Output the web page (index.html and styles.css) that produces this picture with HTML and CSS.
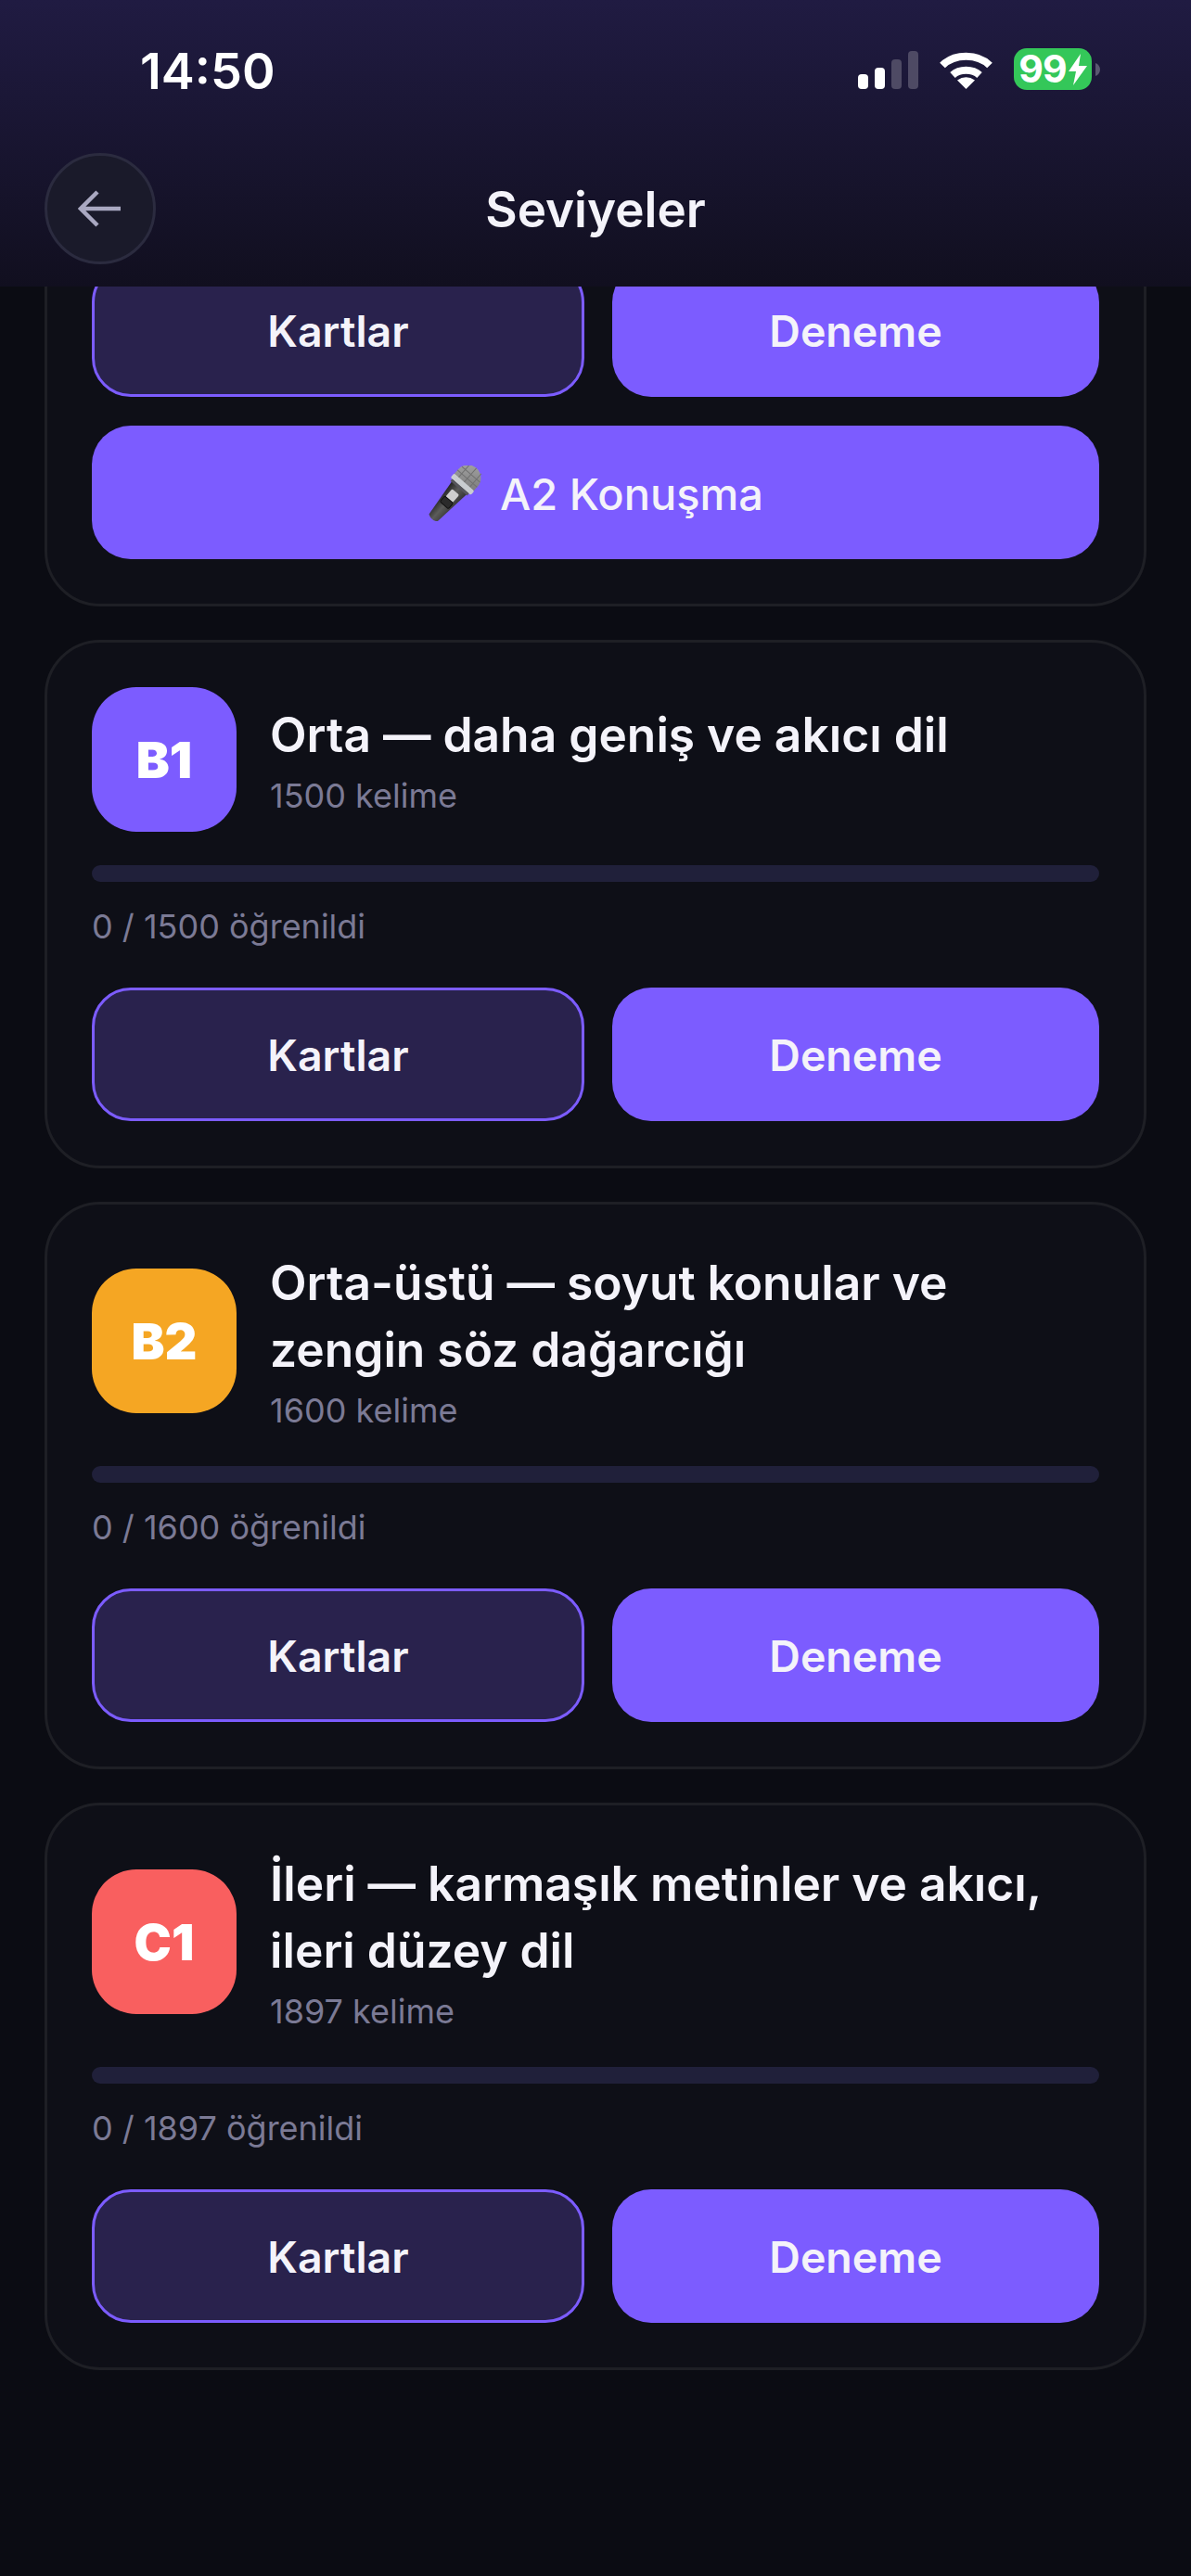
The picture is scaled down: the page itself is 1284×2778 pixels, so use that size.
FILE: index.html
```html
<!DOCTYPE html>
<html lang="tr">
<head>
<meta charset="utf-8">
<title>Seviyeler</title>
<link rel="stylesheet" href="styles.css">
</head>
<body>
<div class="app">
  <header class="topbar">
    <div class="status">
      <span class="time">14:50</span>
      <div class="status-icons">
        <svg class="signal" width="65" height="41" viewBox="0 0 65 41"><rect x="0" y="25" width="11" height="16" rx="4" fill="#fff"/><rect x="18" y="18" width="11" height="23" rx="4" fill="#fff"/><rect x="36" y="9" width="11" height="32" rx="4" fill="#4e4a64"/><rect x="54" y="0" width="11" height="41" rx="4" fill="#4e4a64"/></svg>
        <svg class="wifi" width="57" height="41" viewBox="0 0 57 41"><path d="M3 15.500C16 2.500 41 2.500 54 15.500" fill="none" stroke="#fff" stroke-width="8"/><path d="M14 26C21.500 19 35.500 19 43 26" fill="none" stroke="#fff" stroke-width="8"/><path d="M28.500 41L19 31.500Q28.500 25 38 31.500Z" fill="#fff"/></svg>
        <div class="battery">
          <span class="battery-body"><span>99</span><svg width="20" height="34" viewBox="0 0 20 34"><path d="M13 0L0 19H8L5 34L20 13H11Z" fill="#fff"/></svg></span>
          <svg class="nub" width="5" height="14" viewBox="0 0 5 14"><path d="M0 0C3 1 5 4 5 7S3 13 0 14Z" fill="#5a5670"/></svg>
        </div>
      </div>
    </div>
    <div class="navrow">
      <button class="back" aria-label="Geri">
        <svg width="48" height="40" viewBox="0 0 48 40"><path d="M46 20H3M21 2L3 20L21 38" fill="none" stroke="#a9a8c1" stroke-width="4.500"/></svg>
      </button>
      <h1 class="title">Seviyeler</h1>
      <span class="nav-spacer"></span>
    </div>
  </header>
  <main class="scroller">
    <section class="card card-clipped">
      <div class="actions">
        <button class="btn btn-ghost">Kartlar</button>
        <button class="btn btn-solid">Deneme</button>
      </div>
      <button class="btn btn-solid btn-wide">
        <svg class="mic" width="58" height="60" viewBox="0 0 58 60">
          <defs>
            <linearGradient id="body" x1="0" y1="0" x2="1" y2="0"><stop offset="0" stop-color="#1f1f1f"/><stop offset=".5" stop-color="#5c5c5a"/><stop offset="1" stop-color="#333"/></linearGradient>
            <linearGradient id="head" x1="0" y1="0" x2="1" y2="1"><stop offset="0" stop-color="#a6a6a6"/><stop offset="1" stop-color="#7c7c7c"/></linearGradient>
          </defs>
          <g transform="translate(29 30) rotate(41)">
            <path d="M-11 -12L-6 35Q0 39 6 35L11 -12Z" fill="url(#body)"/>
            <path d="M-14 -22A14 14 0 0 1 14 -22V-15H-14Z" fill="url(#head)"/>
            <path d="M-14 -21H14M-13 -27H13M-8 -35V-14M0 -36V-14M8 -35V-14" stroke="#707070" stroke-width="1" fill="none"/>
            <rect x="-14.500" y="-16" width="29" height="6" rx="2" fill="#c9cdd0"/>
            <rect x="-12" y="-10" width="24" height="3" fill="#55555a"/>
            <rect x="-5" y="-2" width="10" height="11" rx="1.500" fill="#cfcfcf"/>
            <rect x="-6" y="9" width="12" height="8" rx="1.500" fill="#2b2b2b" stroke="#111" stroke-width="1"/>
          </g>
        </svg>
        <span>A2 Konuşma</span>
      </button>
    </section>

    <section class="card">
      <div class="card-head">
        <div class="badge badge-b1">B1</div>
        <div class="card-text">
          <h2 class="card-title">Orta — daha geniş ve akıcı dil</h2>
          <p class="card-sub">1500 kelime</p>
        </div>
      </div>
      <div class="track"></div>
      <p class="progress">0 / 1500 öğrenildi</p>
      <div class="actions">
        <button class="btn btn-ghost">Kartlar</button>
        <button class="btn btn-solid">Deneme</button>
      </div>
    </section>

    <section class="card">
      <div class="card-head">
        <div class="badge badge-b2">B2</div>
        <div class="card-text">
          <h2 class="card-title">Orta-üstü — soyut konular ve zengin söz dağarcığı</h2>
          <p class="card-sub">1600 kelime</p>
        </div>
      </div>
      <div class="track"></div>
      <p class="progress">0 / 1600 öğrenildi</p>
      <div class="actions">
        <button class="btn btn-ghost">Kartlar</button>
        <button class="btn btn-solid">Deneme</button>
      </div>
    </section>

    <section class="card">
      <div class="card-head">
        <div class="badge badge-c1">C1</div>
        <div class="card-text">
          <h2 class="card-title">İleri — karmaşık metinler ve akıcı, ileri düzey dil</h2>
          <p class="card-sub">1897 kelime</p>
        </div>
      </div>
      <div class="track"></div>
      <p class="progress">0 / 1897 öğrenildi</p>
      <div class="actions">
        <button class="btn btn-ghost">Kartlar</button>
        <button class="btn btn-solid">Deneme</button>
      </div>
    </section>
  </main>
</div>
</body>
</html>
```

FILE: styles.css
```css
* { box-sizing: border-box; }
html, body { margin: 0; padding: 0; background: #0b0c13; }
body { font-family: Inter, "Noto Sans", sans-serif; color: #f4f3fa; }
h1, h2, p { margin: 0; }
button { font: inherit; color: inherit; border: 0; background: none; padding: 0; }

.app { width: 1284px; height: 2778px; display: flex; flex-direction: column; overflow: hidden; }

.topbar { height: 309px; flex: none; background: linear-gradient(180deg, #201b42 0%, #110f1f 100%); }
.status { height: 165px; padding: 52px 98px 0 151px; display: flex; justify-content: space-between; align-items: flex-start; }
.time { font-size: 54px; line-height: 50px; font-weight: 600; color: #fff; }
.status-icons { display: flex; align-items: flex-start; }
.signal { margin-top: 3px; margin-right: 23px; }
.wifi { margin-top: 3px; margin-right: 23px; }
.battery { display: flex; align-items: center; gap: 4px; }
.battery-body { width: 84px; height: 45px; border-radius: 14px; background: #34c759; color: #fff; font-size: 41px; line-height: 45px; font-weight: 700; display: flex; align-items: center; justify-content: center; gap: 2px; letter-spacing: -1px; }
.nub { display: block; }

.navrow { display: flex; align-items: center; padding: 0 48px; }
.back { width: 120px; height: 120px; flex: none; border-radius: 50%; background: #1a1a2a; border: 3px solid #2b2b3f; display: flex; align-items: center; justify-content: center; }
.nav-spacer { width: 120px; flex: none; }
.title { flex: 1; text-align: center; font-size: 53px; line-height: 74px; font-weight: 600; color: #f4f3fa; padding-top: 1px; }

.scroller { flex: 1; overflow: hidden; padding: 0 48px; display: flex; flex-direction: column; gap: 36px; }

.card { flex: none; background: #0e0f17; border: 3px solid #1e1f25; border-radius: 60px; padding: 48px; }
.card-clipped { margin-top: -76px; display: flex; flex-direction: column; gap: 31px; }

.card-head { display: flex; align-items: center; gap: 36px; }
.badge { width: 156px; height: 156px; flex: none; border-radius: 48px; display: flex; align-items: center; justify-content: center; font-size: 54px; font-weight: 900; color: #fff; }
.badge-b1 { background: #7c5cff; }
.badge-b2 { background: #f5a623; }
.badge-c1 { background: #f95f5f; }
.card-text { flex: 1; min-width: 0; }
.card-title { font-size: 51.500px; line-height: 72px; font-weight: 600; color: #f4f3fa; }
.card-sub { margin-top: 6px; font-size: 36px; line-height: 48px; font-weight: 400; color: #7b7a95; }

.track { height: 18px; margin-top: 36px; border-radius: 9px; background: #20203a; }
.progress { margin: 24px 0 42px; font-size: 36px; line-height: 48px; color: #7b7a95; }

.actions { display: flex; gap: 30px; }
.btn { box-sizing: content-box; height: 142px; padding-top: 2px; flex: 1 1 0; border-radius: 42px; font-size: 46.500px; font-weight: 600; color: #f4f3fa; display: flex; align-items: center; justify-content: center; }
.btn-solid { background: #7c5cff; }
.btn-ghost { height: 136px; background: #29224d; border: 3px solid #7c5cff; }
.btn-wide { flex: none; width: 100%; gap: 20px; font-size: 47px; font-weight: 500; }
.mic { flex: none; }
```
